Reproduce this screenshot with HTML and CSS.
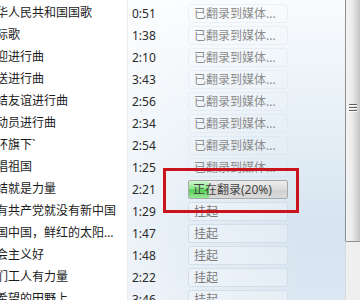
FILE: index.html
```html
<!DOCTYPE html>
<html lang="zh-CN">
<head>
  <meta charset="UTF-8">
  <title>翻录 CD</title>
  <link rel="stylesheet" href="styles.css">
</head>
<body>
  <div class="window">
    <!-- Track list -->
    <div class="list">
      <div class="row"><span class="name">中华人民共和国国歌</span><span class="time">0:51</span><span class="status done">已翻录到媒体...</span></div>
      <div class="row"><span class="name">国际歌</span><span class="time">1:38</span><span class="status done">已翻录到媒体...</span></div>
      <div class="row"><span class="name">欢迎进行曲</span><span class="time">2:10</span><span class="status done">已翻录到媒体...</span></div>
      <div class="row"><span class="name">欢送进行曲</span><span class="time">3:43</span><span class="status done">已翻录到媒体...</span></div>
      <div class="row"><span class="name">团结友谊进行曲</span><span class="time">2:56</span><span class="status done">已翻录到媒体...</span></div>
      <div class="row"><span class="name">运动员进行曲</span><span class="time">2:34</span><span class="status done">已翻录到媒体...</span></div>
      <div class="row"><span class="name">五环旗下`</span><span class="time">2:54</span><span class="status done">已翻录到媒体...</span></div>
      <div class="row"><span class="name">歌唱祖国</span><span class="time">1:25</span><span class="status done">已翻录到媒体...</span></div>
      <div class="row"><span class="name">团结就是力量</span><span class="time">2:21</span>
        <span class="status progress"><span class="fill" style="width: 20%"></span><span class="label">正在翻录(20%)</span></span>
      </div>
      <div class="row"><span class="name">没有共产党就没有新中国</span><span class="time">1:29</span><span class="status paused">挂起</span></div>
      <div class="row"><span class="name">中国中国，鲜红的太阳永不落</span><span class="time">1:47</span><span class="status paused">挂起</span></div>
      <div class="row"><span class="name">社会主义好</span><span class="time">1:48</span><span class="status paused">挂起</span></div>
      <div class="row"><span class="name">咱们工人有力量</span><span class="time">2:22</span><span class="status paused">挂起</span></div>
      <div class="row"><span class="name">在希望的田野上</span><span class="time">3:46</span><span class="status paused">挂起</span></div>
    </div>

    <!-- Vertical scrollbar -->
    <div class="scrollbar">
      <div class="thumb">
        <div class="grip"><i></i><i></i><i></i></div>
      </div>
    </div>

    <!-- Annotation box -->
    <div class="highlight"></div>
  </div>
</body>
</html>
```

FILE: styles.css
```css
* {
  margin: 0;
  padding: 0;
  box-sizing: border-box;
}
html, body {
  width: 360px;
  height: 300px;
  overflow: hidden;
  background: #fff;
  font-family: "Noto Sans", "Noto Sans CJK SC", sans-serif;
  font-size: 12px;
}
.window {
  position: relative;
  display: flex;
  width: 360px;
  height: 300px;
  overflow: hidden;
}
/* List area: white name column, blue gradient behind the other columns */
.list {
  flex: 1;
  padding-top: 2px;
  background:
    linear-gradient(to right, #fff 127px, #e8edf2 127px, #e8edf2 128px, transparent 128px),
    linear-gradient(to right, rgba(255,255,255,0.55) 128px, rgba(255,255,255,0) 300px),
    linear-gradient(to bottom, #f9fbfd 0, #e4eef6 45%, #d6e4f0 75%, #dbe7f2 100%);
}
.row {
  display: grid;
  grid-template-columns: 128px 60px 100px;
  align-items: center;
  height: 22px;
}
.name {
  overflow: hidden;
  white-space: nowrap;
  text-overflow: ellipsis;
  text-indent: -16px;
  padding-right: 11px;
  color: #1b1b1b;
  line-height: 22px;
}
.time {
  padding-left: 4px;
  color: #2a2a2a;
}
.status {
  position: relative;
  height: 19px;
  line-height: 17px;
  padding-left: 5px;
  border-radius: 3px;
  overflow: hidden;
  white-space: nowrap;
}
.status.done {
  color: #8c8c8c;
  border: 1px solid rgba(205, 218, 230, 0.3);
}
.status.paused {
  color: #787878;
  border: 1px solid #d3dee9;
  background: rgba(255, 255, 255, 0.28);
}
.status.progress {
  color: #444;
  border: 1px solid #a8a8a8;
  border-radius: 2px;
  background: linear-gradient(to bottom, #ededed, #dcdcdc 50%, #d1d1d1 51%, #dadada);
  padding-left: 0;
}
.status.progress .fill {
  position: absolute;
  left: 0;
  top: 0;
  bottom: 0;
  background: linear-gradient(to bottom, #d2f6d2, #8ae68a 45%, #55cf55 55%, #98e898);
}
.status.progress .label {
  position: relative;
  padding-left: 4px;
}
/* Scrollbar */
.scrollbar {
  width: 15px;
  background: #efefef;
  border-left: 1px solid #dadada;
}
.thumb {
  height: 270px;
  margin-top: -28px;
  margin-left: -1px;
  border: 1px solid #8f8f8f;
  border-right: none;
  border-radius: 0 0 0 2px;
  background: linear-gradient(to right, #f4f4f4, #ebebeb 45%, #dcdcdc 65%, #c6c6c6);
  display: flex;
  align-items: center;
  justify-content: center;
}
.grip {
  display: flex;
  flex-direction: column;
  gap: 2px;
}
.grip i {
  display: block;
  width: 8px;
  height: 1px;
  background: #606060;
  box-shadow: 0 1px 0 #fafafa;
}
/* Red annotation rectangle */
.highlight {
  position: absolute;
  left: 163px;
  top: 168px;
  width: 136px;
  height: 45px;
  border: 3px solid #c9141d;
}
```
